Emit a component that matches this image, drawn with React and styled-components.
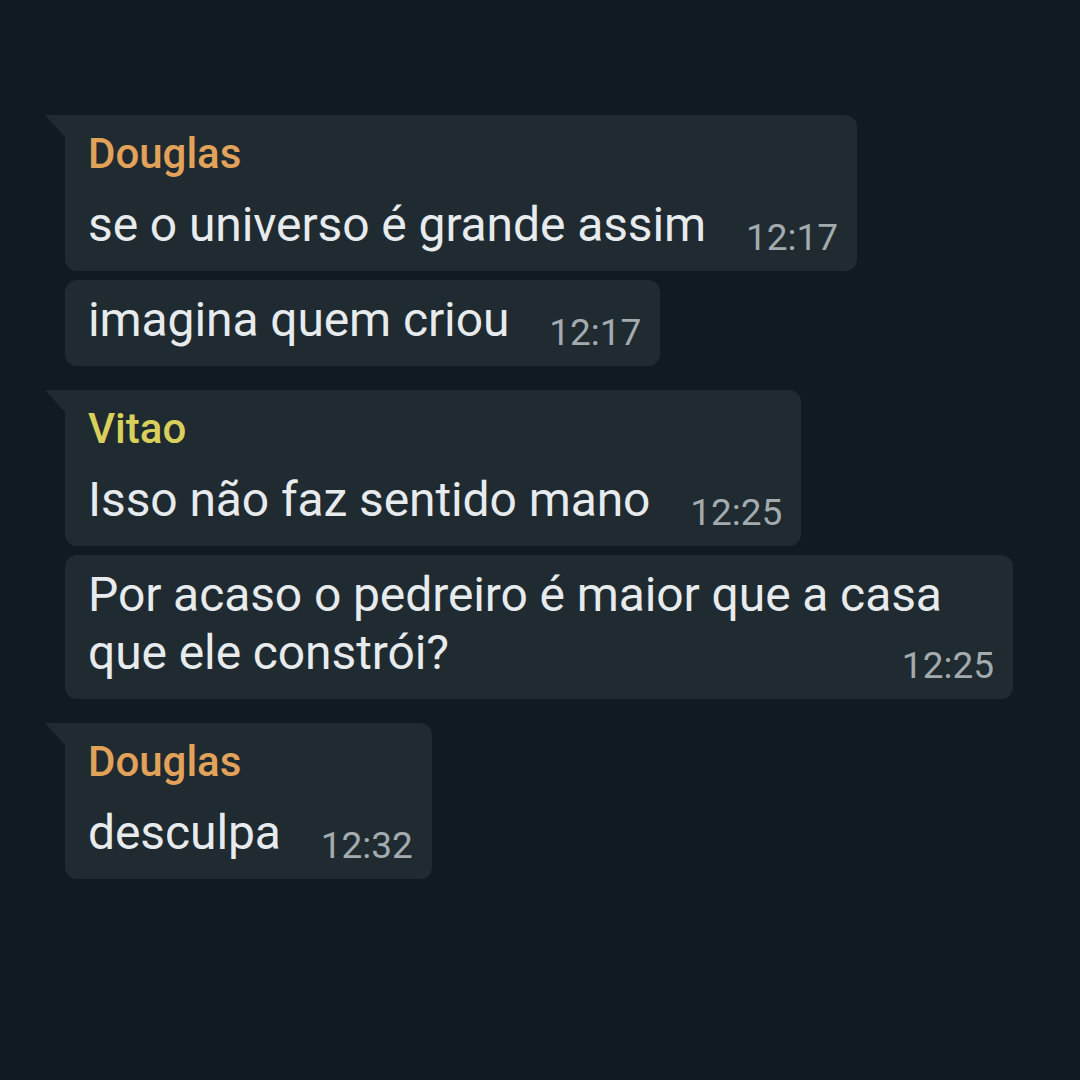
import React from "react";
import styled, { createGlobalStyle } from "styled-components";

const Global = createGlobalStyle`
  html, body { margin: 0; padding: 0; background: #111a21; }
  body { width: 1080px; height: 1080px; overflow: hidden; font-family: Roboto, "Noto Sans", sans-serif; }
`;

const Screen = styled.div`
  width: 1080px;
  height: 1080px;
  background: #111a21;
  box-sizing: border-box;
  padding: 115px 0 0 65px;
  display: flex;
  flex-direction: column;
  gap: 24px;
`;

const Group = styled.div`
  display: flex;
  flex-direction: column;
  align-items: flex-start;
  gap: 9px;
`;

const Bubble = styled.div`
  position: relative;
  box-sizing: border-box;
  max-width: 948px;
  background: #1f2a31;
  border-radius: ${(p) => (p.$tail ? "0 12px 12px 12px" : "12px")};
  padding: ${(p) => (p.$tail ? "15px" : "11px")} 18px 17px 23px;
  color: #e7ebed;

  ${(p) =>
    p.$tail &&
    `
    &::before {
      content: "";
      position: absolute;
      left: -20px;
      top: 0;
      width: 0;
      height: 0;
      border-top: 22px solid #1f2a31;
      border-left: 20px solid transparent;
    }
  `}
`;

const Name = styled.div`
  font-size: 42px;
  font-weight: 500;
  line-height: 48px;
  margin-bottom: 18px;
  color: ${(p) => p.$color};
`;

const Text = styled.div`
  font-size: 48px;
  line-height: 58px;
  letter-spacing: -0.1px;
`;

const Spacer = styled.span`
  display: inline-block;
  width: 133px;
`;

const Time = styled.span`
  position: absolute;
  right: 19px;
  bottom: 15px;
  font-size: 37px;
  line-height: 36px;
  color: #a3abaf;
`;

const ORANGE = "#e3a25a";
const YELLOW = "#d8d05a";

const groups = [
  {
    name: "Douglas",
    color: ORANGE,
    msgs: [
      { text: "se o universo é grande assim", time: "12:17" },
      { text: "imagina quem criou", time: "12:17" },
    ],
  },
  {
    name: "Vitao",
    color: YELLOW,
    msgs: [
      { text: "Isso não faz sentido mano", time: "12:25" },
      { text: "Por acaso o pedreiro é maior que a casa que ele constrói?", time: "12:25" },
    ],
  },
  {
    name: "Douglas",
    color: ORANGE,
    msgs: [{ text: "desculpa", time: "12:32" }],
  },
];

export default function App() {
  return (
    <>
      <Global />
      <Screen>
        {groups.map((g, gi) => (
          <Group key={gi}>
            {g.msgs.map((m, mi) => (
              <Bubble key={mi} $tail={mi === 0}>
                {mi === 0 && <Name $color={g.color}>{g.name}</Name>}
                <Text>
                  {m.text}
                  <Spacer />
                </Text>
                <Time>{m.time}</Time>
              </Bubble>
            ))}
          </Group>
        ))}
      </Screen>
    </>
  );
}
